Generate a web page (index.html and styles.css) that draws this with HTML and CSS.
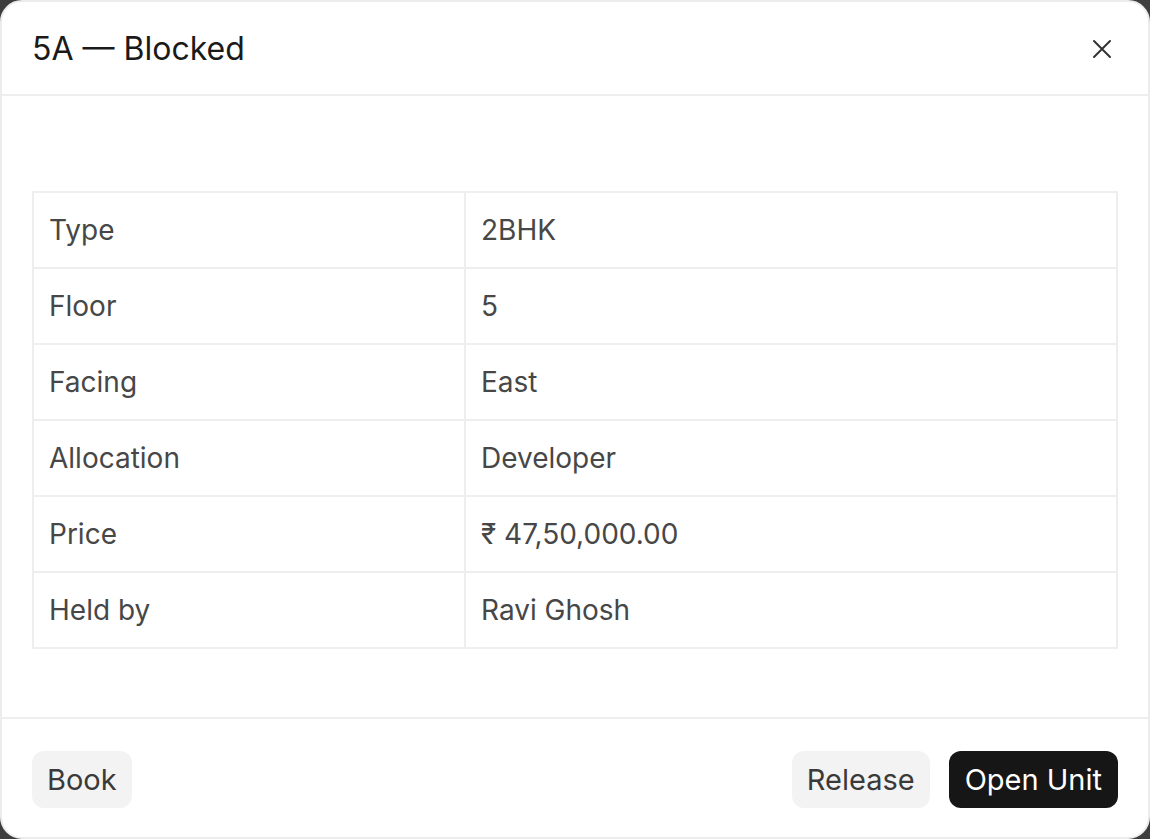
FILE: index.html
```html
<!DOCTYPE html>
<html lang="en">
<head>
<meta charset="utf-8">
<title>5A — Blocked</title>
<link rel="stylesheet" href="styles.css">
</head>
<body>
<div class="dialog">
  <header class="dialog-header">
    <h2 class="dialog-title">5A — Blocked</h2>
    <button class="close-btn" aria-label="Close">
      <svg width="20" height="20" viewBox="0 0 20 20" fill="none" stroke="#333" stroke-width="2" stroke-linecap="round"><path d="M2 2 L18 18 M18 2 L2 18"/></svg>
    </button>
  </header>
  <div class="dialog-body">
    <table class="info-table">
      <tr><td class="label">Type</td><td>2BHK</td></tr>
      <tr><td class="label">Floor</td><td>5</td></tr>
      <tr><td class="label">Facing</td><td>East</td></tr>
      <tr><td class="label">Allocation</td><td>Developer</td></tr>
      <tr><td class="label">Price</td><td>₹ 47,50,000.00</td></tr>
      <tr><td class="label">Held by</td><td>Ravi Ghosh</td></tr>
    </table>
  </div>
  <footer class="dialog-footer">
    <button class="btn btn-light">Book</button>
    <div class="footer-right">
      <button class="btn btn-light">Release</button>
      <button class="btn btn-dark">Open Unit</button>
    </div>
  </footer>
</div>
</body>
</html>
```

FILE: styles.css
```css
* { box-sizing: border-box; }
html, body {
  margin: 0;
  padding: 0;
  height: 100%;
  background: #3d3d3d;
}
body {
  font-family: Inter, "Noto Sans", sans-serif;
}
.dialog {
  width: 1150px;
  height: 839px;
  background: #fff;
  border: 2px solid #ececec;
  border-radius: 22px;
  display: flex;
  flex-direction: column;
  overflow: hidden;
}
.dialog-header {
  height: 94px;
  flex: none;
  display: flex;
  align-items: center;
  justify-content: space-between;
  padding: 0 36px 0 30px;
  border-bottom: 2px solid #eeeeee;
}
.dialog-title {
  margin: 0;
  font-size: 32px;
  font-weight: 400;
  color: #1a1a1a;
}
.close-btn {
  background: none;
  border: 0;
  padding: 0;
  display: flex;
  cursor: pointer;
  margin-top: 2px;
}
.dialog-body {
  flex: 1;
  padding: 95px 30px 0 30px;
}
.info-table {
  width: 100%;
  border-collapse: collapse;
  font-size: 28px;
  color: #474747;
}
.info-table td {
  border: 2px solid #eeeeee;
  height: 76px;
  padding: 0 15px;
  vertical-align: middle;
}
.info-table td.label {
  width: 432px;
}
.dialog-footer {
  flex: none;
  height: 120px;
  border-top: 2px solid #eeeeee;
  display: flex;
  align-items: center;
  justify-content: space-between;
  padding: 2px 30px 0 30px;
}
.footer-right {
  display: flex;
  gap: 19px;
}
.btn {
  font-family: Inter, "Noto Sans", sans-serif;
  font-size: 29px;
  height: 57px;
  padding: 0 15px;
  border: 0;
  border-radius: 12px;
  cursor: pointer;
}
.btn-light {
  background: #f3f3f3;
  color: #3a3a3a;
}
.btn-dark {
  background: #161616;
  color: #fff;
  padding: 0 16px;
}
```
